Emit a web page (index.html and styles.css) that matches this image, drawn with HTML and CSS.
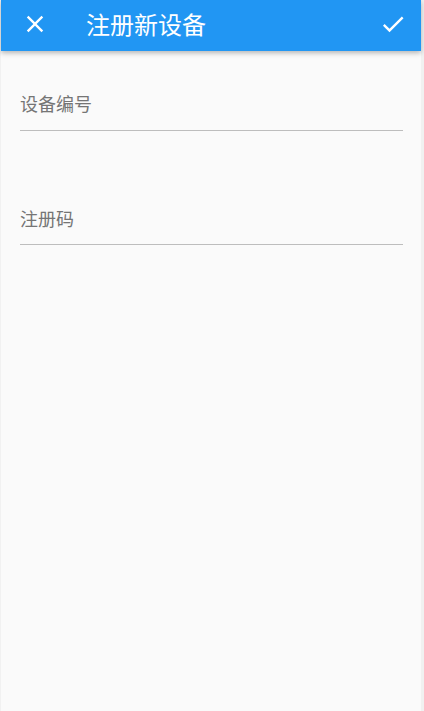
FILE: index.html
```html
<!DOCTYPE html>
<html lang="zh-CN">
<head>
  <meta charset="UTF-8">
  <meta name="viewport" content="width=device-width,initial-scale=1">
  <title>注册新设备</title>
  <link rel="stylesheet" href="styles.css">
</head>
<body>
  <div class="screen">
    <header class="appbar">
      <button class="icon-btn close" aria-label="关闭">
        <svg viewBox="0 0 24 24" width="28" height="28"><path d="M19 6.41L17.59 5 12 10.59 6.41 5 5 6.41 10.59 12 5 17.59 6.41 19 12 13.41 17.59 19 19 17.59 13.41 12z"/></svg>
      </button>
      <h1>注册新设备</h1>
      <button class="icon-btn done" aria-label="确定">
        <svg viewBox="0 0 24 24" width="28" height="28"><path d="M9 16.17L4.83 12l-1.42 1.41L9 19 21 7l-1.41-1.41z"/></svg>
      </button>
    </header>

    <main class="form">
      <label class="field first">
        <span class="label">设备编号</span>
      </label>
      <label class="field second">
        <span class="label">注册码</span>
      </label>
    </main>
  </div>
</body>
</html>
```

FILE: styles.css
```css
:root {
  --primary: #2196f3;
  --bg:      #fafafa;
  --edge:    #f1f1f1;
  --label:   #757575;
  --line:    #bdbdbd;
}
*, *::before, *::after { box-sizing: border-box; }
body {
  margin: 0;
  background: var(--edge);
  font-family: "Noto Sans CJK SC", "Noto Sans", sans-serif;
}
.screen {
  width: 420px;
  min-height: 100vh;
  margin-left: 1px;
  background: var(--bg);
}

/* barre du haut */
.appbar {
  display: flex;
  align-items: center;
  height: 51px;
  padding: 0 14px 0 20px;
  background: var(--primary);
  color: #fff;
  box-shadow: 0 2px 5px rgba(0,0,0,.28);
}
.appbar h1 {
  flex: 1;
  margin: 0 0 3px 37px;
  font-size: 24px;
  font-weight: 400;
  line-height: 32px;
}
.icon-btn {
  display: flex;
  padding: 0;
  margin-bottom: 3px;
  border: none;
  background: none;
  cursor: pointer;
}
.icon-btn svg { fill: #fff; display: block; }

/* champs */
.form {
  padding: 0 18px 0 19px;
}
.field {
  display: block;
  padding-bottom: 15px;
  border-bottom: 1px solid var(--line);
}
.field.first  { margin-top: 40px; }
.field.second { margin-top: 75px; padding-bottom: 14px; }
.field .label {
  display: block;
  font-size: 18px;
  line-height: 24px;
  color: var(--label);
}
```
